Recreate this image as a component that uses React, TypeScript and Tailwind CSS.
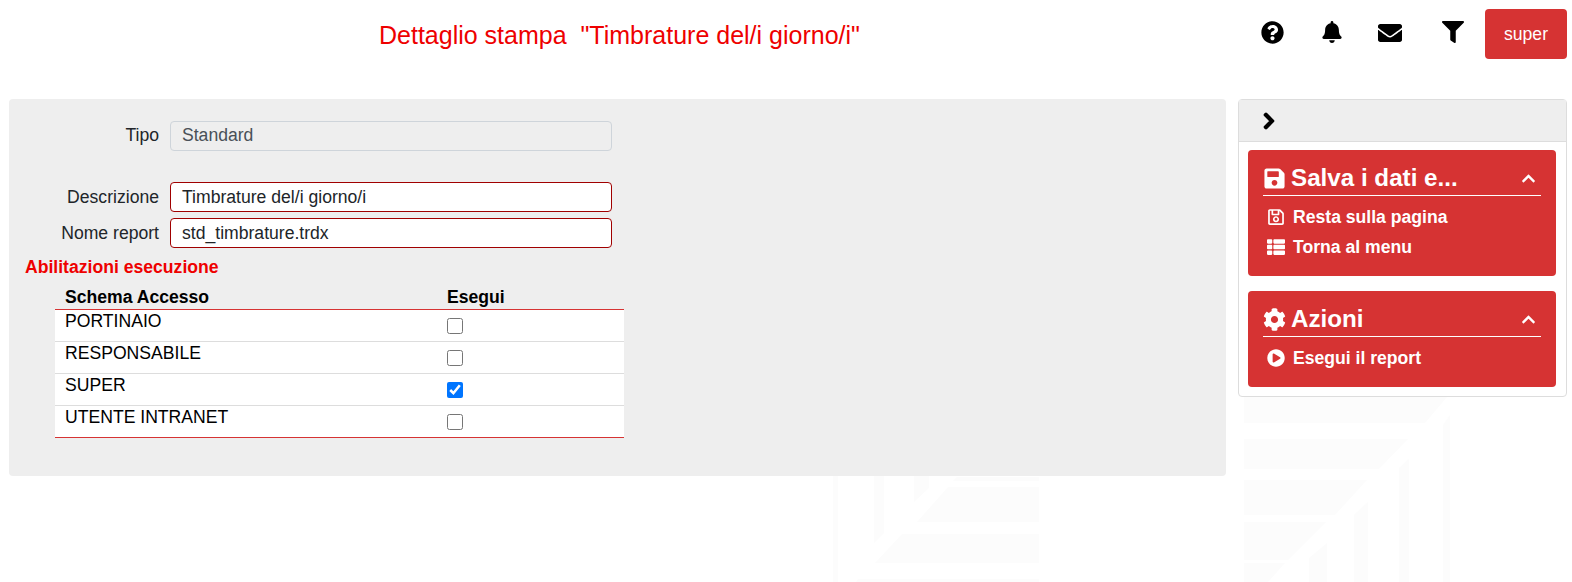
import { FaBell, FaChevronRight, FaChevronUp, FaCog, FaEnvelope, FaFilter, FaPlayCircle, FaQuestionCircle, FaRegSave, FaSave, FaThList } from 'react-icons/fa';
import type { ReactNode } from 'react';

const rows = [
  { name: 'PORTINAIO', checked: false },
  { name: 'RESPONSABILE', checked: false },
  { name: 'SUPER', checked: true },
  { name: 'UTENTE INTRANET', checked: false },
];

function Watermark() {
  const shapes = [
    // left block
    '957,477 1039,477 1039,481 953,481',
    '948,487 1039,487 1039,522 917,522',
    '902,534 1039,534 1039,563 875,563',
    '858,579 1039,579 1039,582 856,582',
    '833,476 838,476 838,582 833,582',
    '874,476 884,476 884,533 874,543',
    '914,476 929,476 929,488 914,502',
    // right block
    '1244,397 1447,397 1425,423 1244,423',
    '1244,439 1408,439 1379,469 1244,469',
    '1244,480 1367,480 1335,515 1244,515',
    '1244,522 1326,522 1288,560 1244,560',
    '1244,563 1285,563 1268,582 1244,582',
    '1443,425 1450,415 1450,582 1443,582',
    '1399,468 1409,459 1409,582 1399,582',
    '1354,515 1368,502 1368,582 1354,582',
    '1309,558 1327,543 1327,582 1309,582',
  ];
  return (
    <svg className="absolute inset-0 -z-10" width="1572" height="582" viewBox="0 0 1572 582" fill="#fcfcfc">
      {shapes.map((p) => (
        <polygon key={p} points={p} />
      ))}
    </svg>
  );
}

function SideGroup({ icon, title, children }: { icon: ReactNode; title: string; children: ReactNode }) {
  return (
    <div className="rounded-[4px] bg-[#d63333] px-[15px] pt-[13px] pb-[14px] text-white">
      <div className="flex h-[33px] items-center border-b border-white pb-[2px]">
        <span className="flex w-[28px] shrink-0 text-[23px]">{icon}</span>
        <span className="flex-1 text-[24.2px] leading-none font-bold">{title}</span>
        <FaChevronUp className="mr-[5px] text-[15px]" />
      </div>
      <div className="pt-[6px]">{children}</div>
    </div>
  );
}

function SideLink({ icon, label }: { icon: ReactNode; label: string }) {
  return (
    <div className="flex h-[30px] items-center text-[17.6px] font-bold">
      <span className="flex w-[30px] shrink-0 justify-center pr-[4px] text-[18px]">{icon}</span>
      <span>{label}</span>
    </div>
  );
}

function Field({ label, value, disabled }: { label: string; value: string; disabled?: boolean }) {
  return (
    <div className="flex items-center">
      <label className={`w-[150px] text-right text-[17.6px] text-[#212529] ${disabled ? 'pb-[2px]' : ''}`}>{label}</label>
      <div
        className={`ml-[11px] flex h-[30px] w-[442px] items-center rounded-[4px] border px-[11px] text-[17.6px] ${
          disabled ? 'border-[#ced4da] bg-[#eeeeee] pb-[2px] text-[#495057]' : 'border-[#a00000] bg-white text-[#212529]'
        }`}
      >
        {value}
      </div>
    </div>
  );
}

export default function App() {
  return (
    <div className="relative isolate h-[582px] w-[1572px] overflow-hidden bg-white font-['Liberation_Sans',Arial,sans-serif]">
      <Watermark />
      <header className="flex h-[99px] items-start">
        <h1 className="mt-[19px] ml-[379px] text-[25px] leading-[32px] whitespace-pre text-[#ee0000]">
          {'Dettaglio stampa  "Timbrature del/i giorno/i"'}
        </h1>
        <div className="mt-[9px] mr-[5px] ml-auto flex items-start text-black">
          <button type="button" className="mt-[12px] mr-[37px] text-[23px]"><FaQuestionCircle /></button>
          <button type="button" className="mt-[12px] mr-[35px] text-[22px]"><FaBell /></button>
          <button type="button" className="mt-[12px] mr-[40px] text-[24px]"><FaEnvelope /></button>
          <button type="button" className="mt-[12px] mr-[21px] text-[22px]"><FaFilter /></button>
          <button type="button" className="h-[50px] w-[82px] rounded-[4px] bg-[#d63333] text-[17.6px] text-white">super</button>
        </div>
      </header>

      <main className="flex items-start pl-[9px]">
        <section className="h-[377px] w-[1217px] rounded-[4px] bg-[#eeeeee] pt-[22px]">
          <Field label="Tipo" value="Standard" disabled />
          <div className="mt-[31px] flex flex-col gap-[6px]">
            <Field label="Descrizione" value="Timbrature del/i giorno/i" />
            <Field label="Nome report" value="std_timbrature.trdx" />
          </div>
          <p className="mt-[8px] ml-[16px] text-[17.6px] leading-[22px] font-bold text-[#ee0000]">Abilitazioni esecuzione</p>
          <table className="mt-[8px] ml-[46px] w-[569px] border-collapse text-[17.6px] text-black">
            <thead>
              <tr className="h-[23px] border-b border-[#d63333] font-bold">
                <th className="w-[383px] pt-[1px] pl-[10px] text-left align-top leading-[20px]">Schema Accesso</th>
                <th className="pt-[1px] pl-[9px] text-left align-top leading-[20px]">Esegui</th>
              </tr>
            </thead>
            <tbody className="bg-white">
              {rows.map((row, i) => (
                <tr key={row.name} className={`h-[32px] border-b ${i === rows.length - 1 ? 'border-[#d63333]' : 'border-[#dddddd]'}`}>
                  <td className="pt-[1px] pl-[10px] align-top leading-[20px]">{row.name}</td>
                  <td className="pl-[9px] align-top">
                    <input type="checkbox" defaultChecked={row.checked} className="mt-[8px] block h-[16px] w-[16px] accent-[#0075ff]" />
                  </td>
                </tr>
              ))}
            </tbody>
          </table>
        </section>

        <aside className="ml-[12px] h-[298px] w-[329px] rounded-[4px] border border-[#dddddd] bg-white">
          <div className="flex h-[42px] items-center border-b border-[#dddddd] bg-[#eeeeee] pl-[21px] text-[18px] text-black">
            <FaChevronRight stroke="currentColor" strokeWidth={40} />
          </div>
          <div className="flex flex-col gap-[15px] pt-[8px] pr-[10px] pl-[9px]">
            <SideGroup icon={<FaSave />} title="Salva i dati e...">
              <SideLink icon={<FaRegSave />} label="Resta sulla pagina" />
              <SideLink icon={<FaThList />} label="Torna al menu" />
            </SideGroup>
            <SideGroup icon={<FaCog />} title="Azioni">
              <SideLink icon={<FaPlayCircle />} label="Esegui il report" />
            </SideGroup>
          </div>
        </aside>
      </main>
    </div>
  );
}
